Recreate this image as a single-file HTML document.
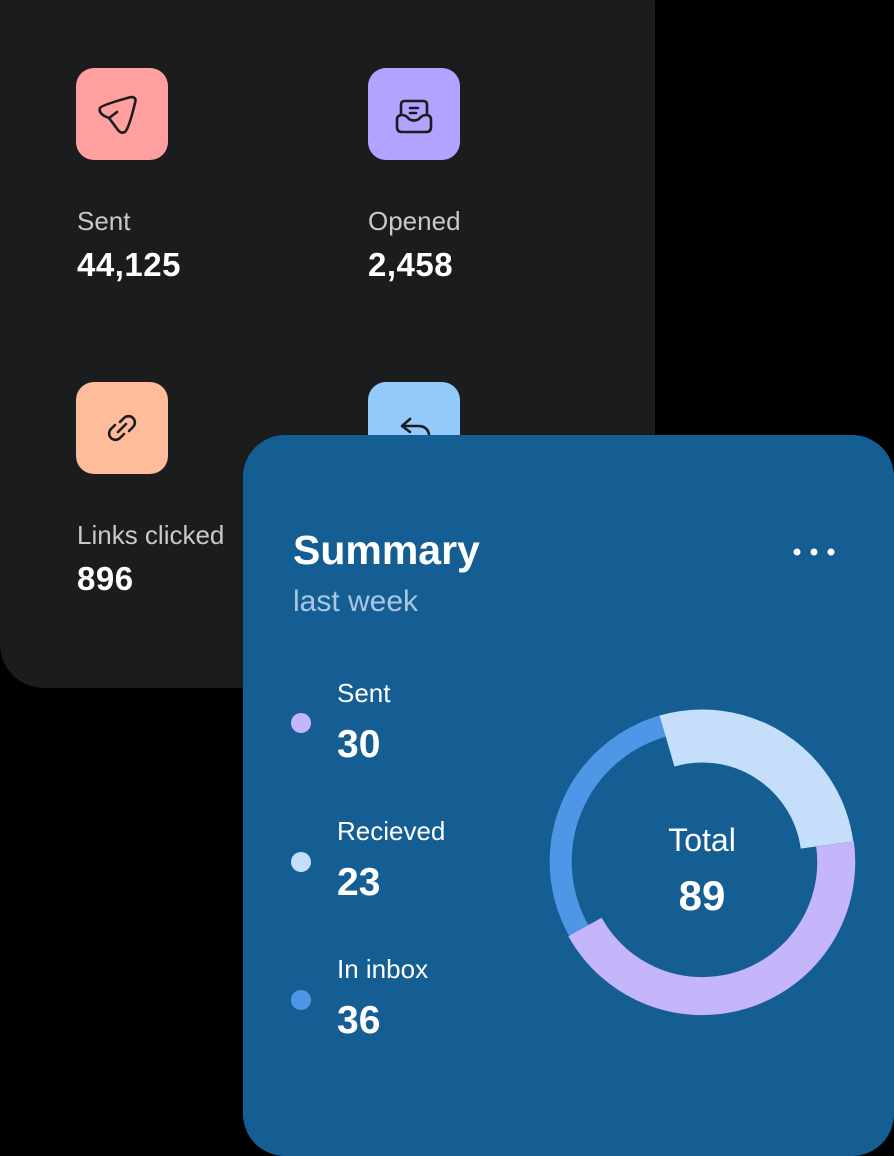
<!DOCTYPE html>
<html><head><meta charset="utf-8"><style>
*{margin:0;padding:0;box-sizing:border-box}
html,body{width:894px;height:1156px;overflow:hidden}
body{background:#000;position:relative;font-family:"Liberation Sans",sans-serif}
.dark{position:absolute;left:0;top:-40px;width:655px;height:728px;background:#1b1c1e;border-radius:44px}
.ic{position:absolute;width:92px;height:92px;border-radius:18px}
.lab{position:absolute;color:#c9c9cb;font-size:26px}
.num{position:absolute;color:#fff;font-size:33px;font-weight:bold;letter-spacing:0.5px}
.blue{position:absolute;left:243px;top:435px;width:651px;height:721px;background:#155e94;border-radius:42px}
.t{position:absolute;color:#fff}
.dot{position:absolute;width:20px;height:20px;border-radius:50%}
</style></head><body>
<div class="dark"></div>
<div class="ic" style="left:76px;top:68px;background:#ff9f9f"><svg width="92" height="92" viewBox="0 0 92 92"><path d="M42 62 L33 50 Q22 46 24 40 Q26 37 55 29 Q61 29 59 35 Q53 60 49 64 Q45 66 42 62 Z M33 50 L41 44" fill="none" stroke="#1b1c1e" stroke-width="2.6" stroke-linejoin="round" stroke-linecap="round"/></svg></div>
<div class="ic" style="left:368px;top:68px;background:#b1a3ff"><svg width="92" height="92" viewBox="0 0 92 92"><path d="M33 45 V37 Q33 33 37 33 H55 Q59 33 59 37 V45 M29 52 Q29 47 34 47 Q38 47 41 51 Q46 54 51 51 Q54 47 58 47 Q63 47 63 52 V59 Q63 64 58 64 H34 Q29 64 29 59 Z M42 40 H50 M42 45 H48" fill="none" stroke="#1b1c1e" stroke-width="2.6" stroke-linejoin="round" stroke-linecap="round"/></svg></div>
<div class="ic" style="left:76px;top:382px;background:#ffbc9b"><svg width="92" height="92" viewBox="0 0 92 92"><path d="M44 40 L48 36 A6 6 0 0 1 57 45 L53 49 M48 52 L44 56 A6 6 0 0 1 35 47 L39 43 M42 50 L50 42" fill="none" stroke="#1b1c1e" stroke-width="2.6" stroke-linecap="round"/></svg></div>
<div class="ic" style="left:368px;top:382px;background:#93c9fb"><svg width="92" height="92" viewBox="0 0 92 92"><path d="M42 37 L34 44 L42 50 M34 44 H50 Q59 44 61 52" fill="none" stroke="#1b1c1e" stroke-width="2.6" stroke-linejoin="round" stroke-linecap="round"/></svg></div>
<div class="lab" style="left:77px;top:206px">Sent</div>
<div class="num" style="left:77px;top:246px">44,125</div>
<div class="lab" style="left:368px;top:206px">Opened</div>
<div class="num" style="left:368px;top:246px">2,458</div>
<div class="lab" style="left:77px;top:520px">Links clicked</div>
<div class="num" style="left:77px;top:560px">896</div>
<div class="blue"></div>
<div class="t" style="left:293px;top:527px;font-size:41px;font-weight:bold">Summary</div>
<div class="t" style="left:293px;top:585px;font-size:30px;color:#a9c6e2">last week</div>
<svg style="position:absolute;left:790px;top:545px" width="50" height="14"><circle cx="7" cy="7" r="3.5" fill="#fff"/><circle cx="24" cy="7" r="3.5" fill="#fff"/><circle cx="41" cy="7" r="3.5" fill="#fff"/></svg>
<div class="dot" style="left:291px;top:713px;background:#c5b5fb"></div>
<div class="dot" style="left:291px;top:852px;background:#c5dffb"></div>
<div class="dot" style="left:291px;top:990px;background:#4f97e6"></div>
<div class="t" style="left:337px;top:678px;font-size:26px">Sent</div>
<div class="t" style="left:337px;top:723px;font-size:39px;font-weight:bold">30</div>
<div class="t" style="left:337px;top:816px;font-size:26px">Recieved</div>
<div class="t" style="left:337px;top:861px;font-size:39px;font-weight:bold">23</div>
<div class="t" style="left:337px;top:954px;font-size:26px">In inbox</div>
<div class="t" style="left:337px;top:999px;font-size:39px;font-weight:bold">36</div>
<svg style="position:absolute;left:0;top:0" width="894" height="1156" viewBox="0 0 894 1156">
<g fill="none" transform="translate(702 862)">
<path d="M-39 -136 A141 141 0 0 0 -123 69" stroke="#4f97e6" stroke-width="22"/>
<path d="M133 -18 A134 134 0 0 1 -117 65" stroke="#c5b5fb" stroke-width="38"/>
<path d="M-35 -121 A126 126 0 0 1 125 -17" stroke="#c5dffb" stroke-width="53"/>
</g>
</svg>
<div class="t" style="left:602px;top:822px;width:200px;text-align:center;font-size:32px">Total</div>
<div class="t" style="left:602px;top:872px;width:200px;text-align:center;font-size:42px;font-weight:bold">89</div>
</body></html>
